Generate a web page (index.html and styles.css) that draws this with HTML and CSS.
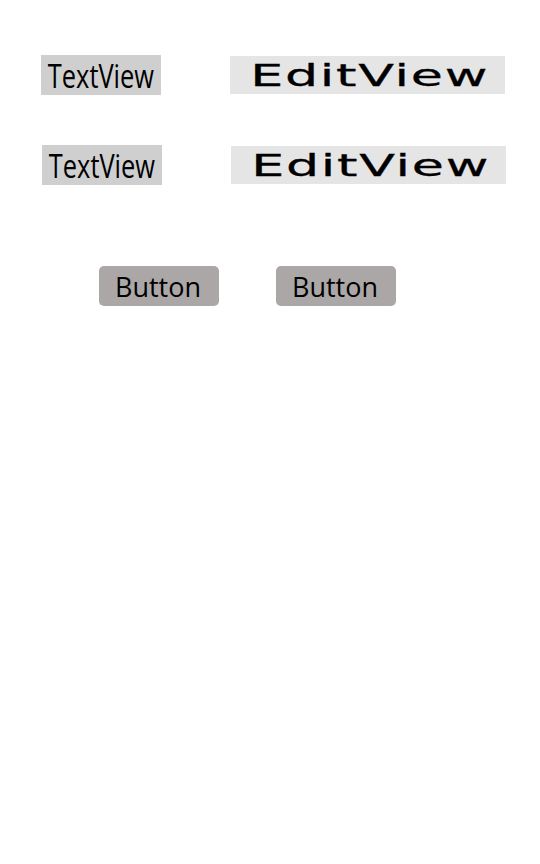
FILE: index.html
```html
<!DOCTYPE html>
<html>
<head>
<meta charset="utf-8">
<link rel="stylesheet" href="styles.css">
</head>
<body>
<div class="screen">
  <div class="row">
    <div class="textview"><span class="tv-text">TextView</span></div>
    <div class="editview"><span class="ev-text">EditView</span></div>
  </div>
  <div class="row row-second">
    <div class="textview"><span class="tv-text">TextView</span></div>
    <div class="editview"><span class="ev-text">EditView</span></div>
  </div>
  <div class="buttons">
    <div class="button"><span class="btn-text">Button</span></div>
    <div class="button"><span class="btn-text">Button</span></div>
  </div>
</div>
</body>
</html>
```

FILE: styles.css
```css
html, body {
  margin: 0;
  padding: 0;
  background: #ffffff;
}
.screen {
  width: 540px;
  height: 864px;
  padding-top: 55px;
  box-sizing: border-box;
  font-family: "Open Sans", "Noto Sans", sans-serif;
  color: #000;
}
.row {
  display: flex;
  align-items: center;
  height: 40px;
  padding-left: 41px;
  gap: 69px;
}
.row-second {
  margin-top: 50px;
  padding-left: 42px;
}
.textview {
  width: 120px;
  height: 40px;
  background: #cfcfcf;
  display: flex;
  align-items: center;
  justify-content: center;
}
.tv-text {
  display: inline-block;
  font-size: 33px;
  line-height: 40px;
  margin: 0 -16px;
  transform: scaleX(0.77);
  white-space: nowrap;
  position: relative;
  top: 1px;
}
.editview {
  width: 275px;
  height: 38px;
  background: #e5e5e5;
  display: flex;
  align-items: center;
  justify-content: center;
}
.ev-text {
  display: inline-block;
  font-family: "DejaVu Sans", sans-serif;
  font-size: 30px;
  line-height: 38px;
  letter-spacing: 1px;
  margin: 0 -50px;
  transform: scaleX(1.74);
  white-space: nowrap;
  position: relative;
  top: 1px;
  left: 2px;
  -webkit-text-stroke: 0.3px #000;
}
.buttons {
  display: flex;
  margin-top: 81px;
  padding-left: 99px;
  gap: 57px;
}
.button {
  width: 120px;
  height: 40px;
  background: #aba7a7;
  border-radius: 5px;
  display: flex;
  align-items: center;
  justify-content: center;
}
.btn-text {
  font-size: 27px;
  line-height: 40px;
  position: relative;
  top: 1px;
  left: -1px;
}
```
